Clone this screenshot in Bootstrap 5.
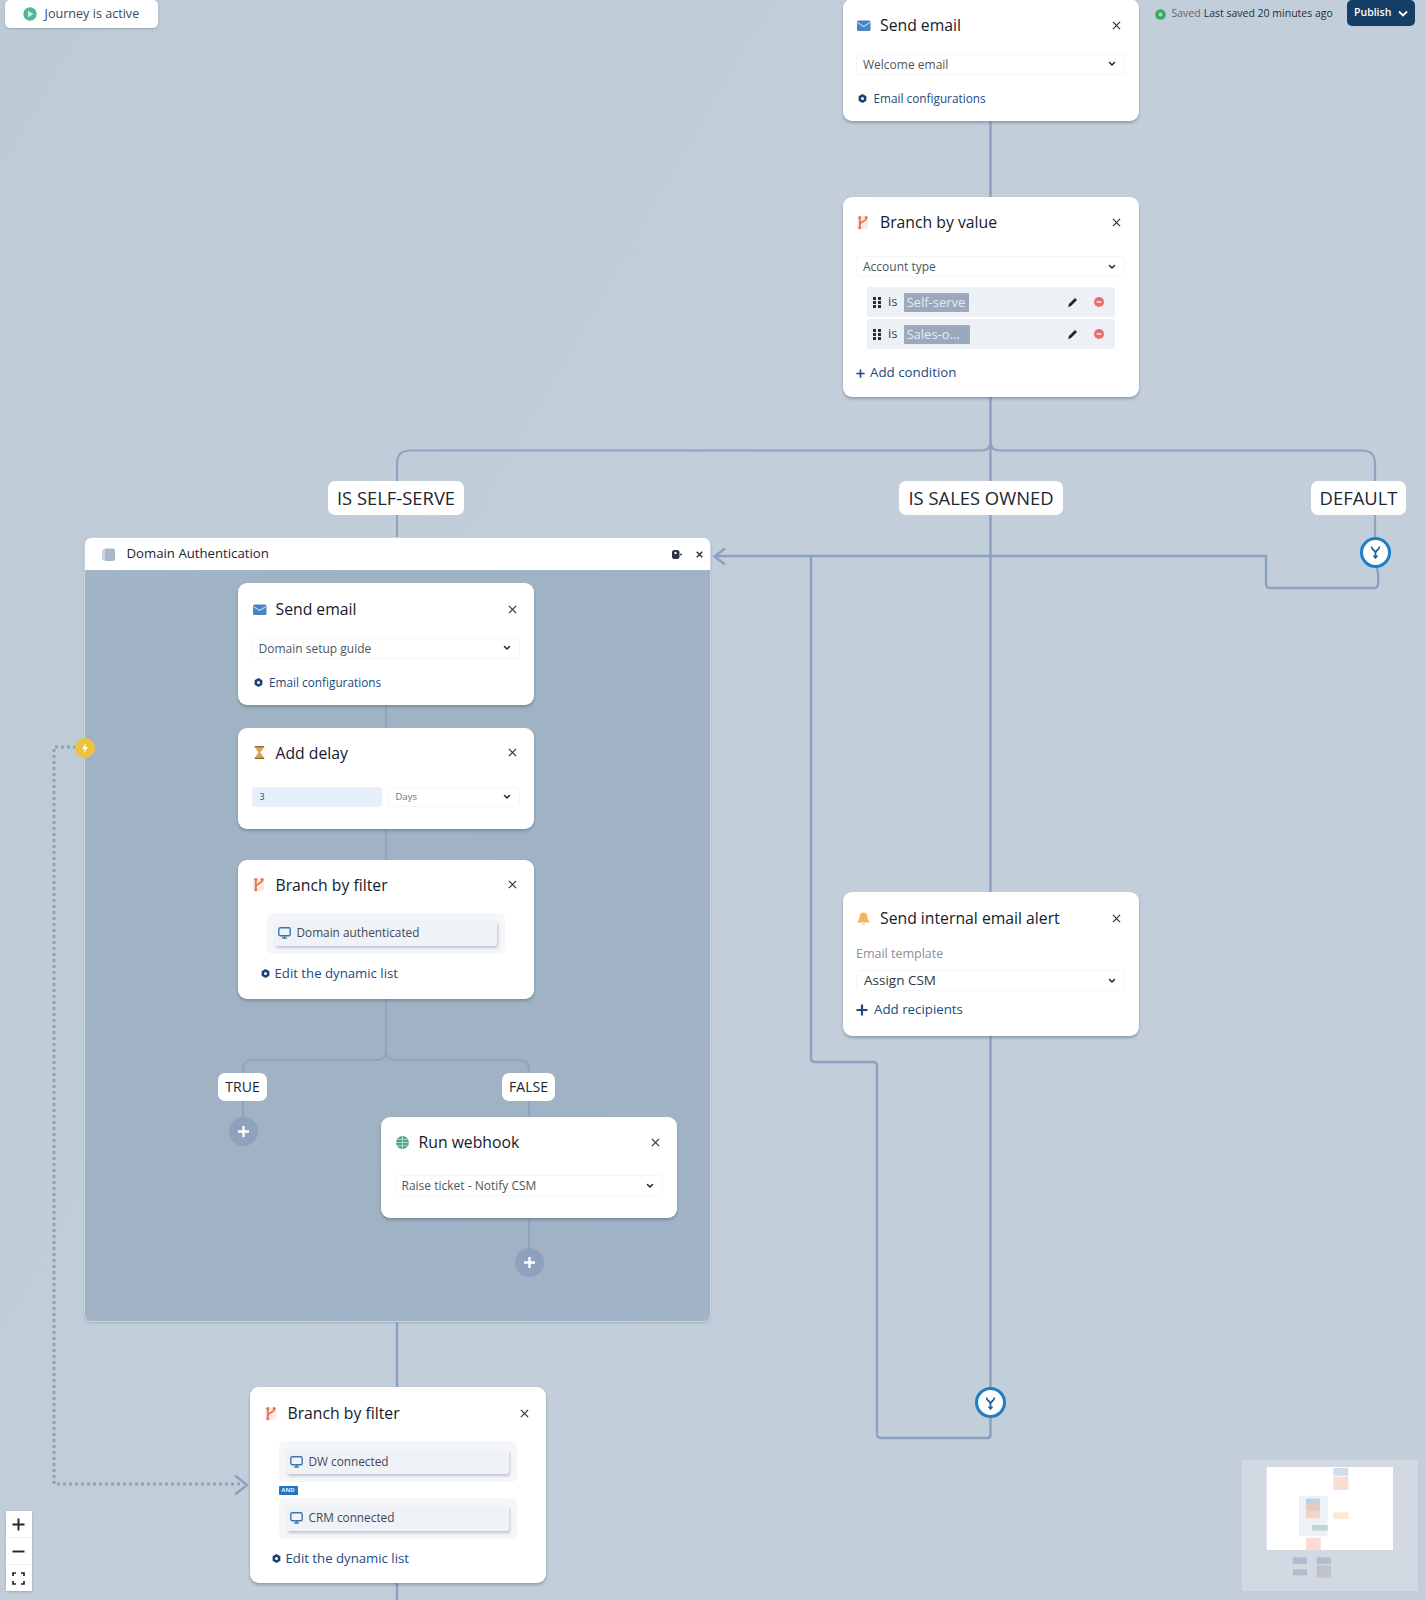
<!doctype html>
<html lang="en">
<head>
<meta charset="utf-8">
<title>Journey builder</title>
<link href="https://cdn.jsdelivr.net/npm/bootstrap@5.3.0/dist/css/bootstrap.min.css" rel="stylesheet">
<script src="https://cdn.jsdelivr.net/npm/bootstrap@5.3.0/dist/js/bootstrap.bundle.min.js"></script>
<style>
html,body{margin:0;background:#c1cdd9;}
body{font-family:"Open Sans","Liberation Sans",sans-serif;color:#1c2530;}
.flow-canvas{position:relative;width:1425px;height:1600px;overflow:hidden;background:linear-gradient(120deg,#bdcbd7 0%,#c2ced9 45%,#c3ced9 100%);}
.flow-lines{position:absolute;left:0;top:0;width:1425px;height:1600px;}
.flow-lines path{fill:none;stroke:#8aa2bf;stroke-width:2.4;}
.flow-lines path.dots{stroke:#8fa2b8;stroke-width:3;stroke-dasharray:3 3;}
.flow-lines path.thin{stroke:#8fa4bf;stroke-width:2.2;}
.node-card{position:absolute;width:296px;padding:13px 14px 0 13.5px;border:0;border-radius:9px;background:#fff;box-shadow:0 2px 3px rgba(64,84,108,.4);}
.node-head{height:24px;display:flex;align-items:center;}
.node-icon{width:15px;height:15px;flex:none;margin-right:9px;}
.node-title{font-size:15.75px;line-height:24px;color:#15202b;flex:1;white-space:nowrap;}
.x-btn{width:9px;height:9px;padding:0;border:0;display:flex;margin-right:3.5px;flex:none;}
.x-btn svg{width:9px;height:9px;display:block;}
.flow-select{--bs-form-select-bg-img:url("data:image/svg+xml,%3csvg xmlns='http://www.w3.org/2000/svg' viewBox='0 0 16 16'%3e%3cpath fill='none' stroke='%231c2530' stroke-width='3' stroke-linecap='round' stroke-linejoin='round' d='m3 5 5 5 5-5'/%3e%3c/svg%3e");display:block;height:21px;min-height:0;width:268.5px;padding:0 22px 0 6px;font-size:12px;line-height:19px;color:#4d5661;border:1px solid #f3f5f7;border-radius:4px;background-size:8px 8px;background-position:right 8px center;font-family:inherit;box-shadow:none;}
.flow-link{display:flex;align-items:center;height:18px;font-size:11.8px;font-weight:500;color:#1c4a80;text-decoration:none;white-space:nowrap;}
.gear{width:9px;height:9px;margin-left:2px;margin-right:6.5px;flex:none;}
.card-send-a{left:842.5px;top:-1px;height:121.6px;padding-top:14px;}
.card-value{left:842.5px;top:197px;height:200px;}
.card-alert{left:842.5px;top:892px;height:144px;padding-top:14px;}
.card-send-b{left:238px;top:583px;height:121.5px;padding-top:14px;}
.card-delay{left:238px;top:727.5px;height:101.5px;}
.card-filter-a{left:238px;top:859.5px;height:139px;}
.card-webhook{left:381px;top:1117px;height:101px;}
.card-filter-b{left:250px;top:1387px;height:196px;padding-top:14px;}
.sel-a{margin-top:16.5px;}
.sel-b{margin-top:22px;}
.sel-c{margin-top:21px;}
.link-a{margin-top:15px;}
.cond-row{display:flex;align-items:center;width:247.5px;height:30px;margin-left:11px;padding-left:6px;background:#edf1f6;border-radius:3px;font-size:13px;color:#39424d;}
.cond-first{margin-top:10px;}
.cond-next{margin-top:2px;}
.grip{width:8px;height:11px;margin-right:7px;}
.val-pill{display:block;width:65px;height:19px;margin-left:7px;padding-left:2px;line-height:19px;background:#9aa9bd;color:#e6ebf1;font-size:13px;border-radius:1px;white-space:nowrap;overflow:hidden;}
.val-wide{width:66px;}
.pen{width:11px;height:11px;margin-left:auto;}
.minus{width:10px;height:10px;margin-left:16px;margin-right:11px;}
.add-link{font-size:13.3px;font-weight:500;margin-top:15px;}
.plus-s{width:9px;height:9px;margin-left:-.5px;margin-right:5.5px;flex:none;}
.plus-m{width:12px;height:12px;margin-left:0;margin-right:6px;flex:none;}
.tmpl-label{margin-top:15px;font-size:12.5px;line-height:18px;color:#8a9098;}
.sel-t{margin-top:7px;font-size:13.5px;color:#2f3842;padding-left:7px;}
.link-t{margin-top:10px;height:18px;}
.delay-row{display:flex;gap:6.5px;margin-top:22px;}
.delay-num{width:131px;height:20.5px;min-height:0;padding:0 0 0 8px;font-size:9px;line-height:20px;border:0;border-radius:3px;background:#e6effb;color:#3e4854;}
.delay-sel{width:132px;height:20.5px;font-size:9.5px;line-height:18.5px;padding-left:6px;color:#6a727c;}
.filter-box{width:238.5px;padding:8.5px 8.5px 8px;margin-left:15px;background:#f4f6f9;border-radius:6px;}
.filter-first{margin-top:16px;}
.filter-item{display:flex;align-items:center;height:24.5px;padding-left:3px;font-size:11.8px;color:#3f4853;background:#eff2f6;box-shadow:1px 2px 3px rgba(90,105,125,.35);border-radius:2px;white-space:nowrap;}
.screen{width:13px;height:12px;margin-right:5.5px;flex:none;}
.link-f{font-size:13.2px;margin-top:11px;margin-left:7px;}
.link-f2{font-size:13.2px;margin-top:11px;margin-left:6px;}
.link-f .gear,.link-f2 .gear{margin-right:5px;}
.and-tag{display:block;width:19px;height:9px;margin:4px 0 2.5px 15px;background:#1f76c4;color:#dfeefa;font-size:6px;font-weight:700;line-height:9px;text-align:center;border-radius:1px;}
.group-frame{position:absolute;left:84px;top:537px;width:627px;height:785px;border:1px solid #c8d5df;border-radius:7px;background:linear-gradient(135deg,#a1b4c5,#a0b2c4 60%,#a2b3c7);box-shadow:0 1px 2px rgba(64,84,108,.25);overflow:hidden;}
.group-head{height:32px;padding-left:16px;padding-right:4px;background:#fff;display:flex;align-items:center;font-size:13.2px;font-weight:500;color:#1c2530;}
.group-doc{width:15px;height:15px;margin-right:10.5px;}
.group-exp{width:11px;height:11px;margin-left:auto;}
.group-x{width:7px;height:7px;margin-left:14px;margin-right:3px;}
.flow-tag{position:absolute;display:flex;align-items:center;justify-content:center;background:#fff;border-radius:7px;color:#1c2530;white-space:nowrap;}
.tag-big{top:481px;height:34px;font-size:18.4px;}
.tag-self{left:328px;width:136px;}
.tag-sales{left:899px;width:164px;}
.tag-default{left:1311px;width:95px;}
.tag-small{top:1072.500px;height:28px;font-size:14px;}
.tag-true{left:218px;width:49px;}
.tag-false{left:502px;width:53px;}
.add-dot{position:absolute;width:29px;height:29px;border-radius:50%;background:#8ea2be;display:flex;align-items:center;justify-content:center;}
.add-dot svg{width:13px;height:13px;}
.dot-a{left:228.5px;top:1116.5px;}
.dot-b{left:514.5px;top:1248px;}
.merge-dot{position:absolute;width:31px;height:31px;border-radius:50%;background:#fff;border:3px solid #1f7fc4;display:flex;align-items:center;justify-content:center;}
.merge-dot svg{width:13px;height:14px;}
.merge-a{left:1360px;top:536.5px;}
.merge-b{left:975px;top:1387px;}
.bolt-dot{position:absolute;left:75px;top:738px;width:20px;height:20px;border-radius:50%;background:#ecc23f;display:flex;align-items:center;justify-content:center;}
.bolt-dot svg{width:8px;height:10px;}
.journey-pill{position:absolute;left:4.5px;top:0;width:153.5px;height:28px;padding-left:18px;display:flex;align-items:center;background:#fff;border-radius:5px;box-shadow:0 1px 2px rgba(64,84,108,.3);font-size:12.6px;color:#414a54;}
.journey-pill svg{width:14px;height:14px;margin-right:8px;}
.save-state{position:absolute;left:1155px;top:5px;height:18px;display:flex;align-items:center;font-size:10.5px;color:#27303a;white-space:nowrap;}
.save-state svg{width:11px;height:11px;margin-right:5.5px;}
.save-word{color:#5f6974;margin-right:3px;}
.publish-btn{position:absolute;left:1347px;top:0;width:67.5px;height:26px;padding:0 0 0 7px;display:flex;align-items:center;background:#123f63;border:0;border-radius:5px;color:#fff;font-size:10.5px;font-weight:600;}
.publish-btn svg{width:10px;height:7px;margin-left:7px;}
.zoom-box{position:absolute;left:6px;top:1511px;width:26px;height:80px;background:#fff;display:flex;flex-direction:column;box-shadow:0 1px 2px rgba(64,84,108,.3);}
.zoom-btn{flex:1;padding:0 1px 0 0;border:0;border-radius:0;display:flex;align-items:center;justify-content:center;}
.zoom-btn + .zoom-btn{border-top:1px solid #eef1f4;}
.zoom-btn svg{width:13px;height:13px;}
.mini-map{position:absolute;left:1242px;top:1460px;width:176px;height:131px;background:#d2d9e3;}
.mini-map svg{display:block;width:176px;height:131px;filter:blur(.5px);}
</style>
</head>
<body>
<svg width="0" height="0" class="position-absolute">
  <defs>
    <symbol id="ic-mail" viewBox="0 0 15 15"><rect x="1" y="2.500" width="13.500" height="10.500" rx="1.500" fill="#4a84c4"/><path d="M1.500 4.500l6.200 4 6.300-4" fill="none" stroke="#b9d2ec" stroke-width="1.100"/></symbol>
    <symbol id="ic-branch" viewBox="0 0 15 15"><rect x="1" y="1" width="11" height="13" rx="3" fill="#fbe9e2"/><path d="M3.800 3v10M10.200 3c0 4-6.400 3-6.400 7" fill="none" stroke="#e8704a" stroke-width="1.700"/><circle cx="3.800" cy="2.600" r="1.500" fill="#e8704a"/><circle cx="10.200" cy="2.600" r="1.500" fill="#e8704a"/><circle cx="3.800" cy="12.800" r="1.500" fill="#e8704a"/></symbol>
    <symbol id="ic-glass" viewBox="0 0 15 15"><path d="M2.800 1h9.400v1.700H2.800zM2.800 12.300h9.400V14H2.800z" fill="#8a6a3c"/><path d="M4 2.700h7c0 3-2.400 3.600-2.400 4.800s2.400 1.800 2.400 4.800H4c0-3 2.400-3.600 2.400-4.800S4 5.700 4 2.700z" fill="#d9a653"/></symbol>
    <symbol id="ic-bell" viewBox="0 0 15 15"><path d="M7.500 1.500c-2.800 0-4 2-4 4.500 0 2.500-.8 3.500-2 4.700v.8h12v-.8c-1.200-1.200-2-2.200-2-4.700 0-2.500-1.200-4.500-4-4.500z" fill="#f4b560"/><path d="M6 12.600h3a1.500 1.500 0 0 1-3 0z" fill="#f7c98a"/></symbol>
    <symbol id="ic-globe" viewBox="0 0 15 15"><circle cx="7.500" cy="7.500" r="6.500" fill="#4fa488"/><path d="M1 7.500h13M7.500 1v13M2.200 4.300h10.600M2.200 10.700h10.600" stroke="#bfe0d5" stroke-width=".9" fill="none"/></symbol>
    <symbol id="ic-gear" viewBox="0 0 9 9"><path d="M4.500 0l3.900 2.250v4.500L4.500 9 .6 6.750v-4.500z" fill="#174472"/><circle cx="4.500" cy="4.500" r="1.500" fill="#fff"/></symbol>
    <symbol id="ic-screen" viewBox="0 0 13 12"><rect x=".8" y=".8" width="11.400" height="8" rx="1.500" fill="none" stroke="#3f74ad" stroke-width="1.400"/><path d="M4 11h5" stroke="#3f74ad" stroke-width="1.400"/><path d="M6.500 9v2" stroke="#3f74ad" stroke-width="1.200"/></symbol>
    <symbol id="ic-x" viewBox="0 0 10 10"><path d="M1 1l8 8M9 1l-8 8" stroke="#28323c" stroke-width="1.300" fill="none"/></symbol>
    <symbol id="ic-merge" viewBox="0 0 13 14"><path d="M2.500 1.500c0 3.500 4 3.500 4 6.500v4.500M10.500 1.500c0 3.500-4 3.500-4 6.500" fill="none" stroke="#2a5f95" stroke-width="1.700"/><path d="M4.500 10.500l2 2.500 2-2.500" fill="none" stroke="#2a5f95" stroke-width="1.500"/></symbol>
    <symbol id="ic-plus" viewBox="0 0 13 13"><path d="M6.500 1v11M1 6.500h11" stroke="#fff" stroke-width="2.300" fill="none"/></symbol>
    <symbol id="ic-plus-navy" viewBox="0 0 12 12"><path d="M6 .5v11M.5 6h11" stroke="#1c4a80" stroke-width="2.200" fill="none"/></symbol>
  </defs>
</svg>

<main class="flow-canvas">
  <section class="group-frame">
    <header class="group-head">
      <svg class="group-doc" viewBox="0 0 15 15"><rect x="3" y="1.500" width="11" height="12.500" rx="2" fill="#aab9c9"/><rect x="1" y="2.500" width="3" height="11" rx="1.500" fill="#c9d4df"/></svg>
      <span>Domain Authentication</span>
      <svg class="group-exp" viewBox="0 0 11 11"><rect x="1" y="1" width="7.500" height="9" rx="2.500" fill="#2b3440"/><circle cx="4.500" cy="4" r="1.200" fill="#fff"/><circle cx="10" cy="5.500" r="1" fill="#2b3440"/></svg>
      <svg class="group-x" viewBox="0 0 10 10"><path d="M1 1l8 8M9 1l-8 8" stroke="#2b3440" stroke-width="2" fill="none"/></svg>
    </header>
  </section>

  <svg class="flow-lines" viewBox="0 0 1425 1600">
    <path d="M990.500 120V197M990.500 397V892M990.500 1036V1403"/>
    <path class="thin" d="M990.500 442q0 8.500-10 8.500H410q-13 0-13 13V537"/>
    <path class="thin" d="M990.500 442q0 8.500 10 8.500H1362q13 0 13 13V537"/>
    <path d="M990.500 1418V1435q0 3-3 3H881q-4 0-4-4V1066q0-4-4-4H815q-4 0-4-4V556"/>
    <path d="M1376 566Q1379 572 1378 584q0 4-4 4H1270q-4 0-4-4V556H716"/>
    <path d="M725 548.500L714.500 556.500L725 564.500"/>
    <path class="thin" d="M386 704V728M386 829V860M386 998V1050q0 10-8 10H253q-10 0-10 10V1131M386 1050q0 10 8 10H519q10 0 10 10V1117M529 1218V1263"/>
    <path d="M397 1322V1600"/>
    <path class="dots" d="M76 747H54V1484H240"/>
    <path d="M235 1475.500L247 1485L235 1494.500" stroke="#93a5bb"/>
  </svg>

  <div class="journey-pill">
    <svg viewBox="0 0 14 14"><circle cx="7" cy="7" r="6.700" fill="#4fb893"/><path d="M5 3.800L10.500 7L5 10.200z" fill="#cdeee0"/></svg>
    <span>Journey is active</span>
  </div>

  <div class="save-state">
    <svg viewBox="0 0 11 11"><circle cx="5.500" cy="5.500" r="5.300" fill="#3aa866"/><circle cx="5.500" cy="5.500" r="2" fill="#a5dcbb"/></svg>
    <span class="save-word">Saved</span><span>Last saved 20 minutes ago</span>
  </div>
  <button class="btn publish-btn" type="button">Publish
    <svg viewBox="0 0 10 7"><path d="M1 1.500l4 4 4-4" fill="none" stroke="#fff" stroke-width="1.800"/></svg>
  </button>

  <article class="card node-card card-send-a">
    <div class="node-head"><svg class="node-icon"><use href="#ic-mail"/></svg><span class="node-title">Send email</span><button class="btn x-btn" type="button" aria-label="Remove"><svg><use href="#ic-x"/></svg></button></div>
    <select class="form-select flow-select sel-a"><option>Welcome email</option></select>
    <a class="flow-link link-a" href="#"><svg class="gear"><use href="#ic-gear"/></svg>Email configurations</a>
  </article>

  <article class="card node-card card-value">
    <div class="node-head"><svg class="node-icon"><use href="#ic-branch"/></svg><span class="node-title">Branch by value</span><button class="btn x-btn" type="button" aria-label="Remove"><svg><use href="#ic-x"/></svg></button></div>
    <select class="form-select flow-select sel-b"><option>Account type</option></select>
    <div class="cond-row cond-first">
      <svg class="grip" viewBox="0 0 8 11"><path d="M0 0h3v3H0zM5 0h3v3H5zM0 4h3v3H0zM5 4h3v3H5zM0 8h3v3H0zM5 8h3v3H5z" fill="#27303a"/></svg>
      <span>is</span><span class="val-pill">Self-serve</span>
      <svg class="pen" viewBox="0 0 11 11"><path d="M8 1l2 2-6 6-3 1 1-3z" fill="#1c2530"/></svg>
      <svg class="minus" viewBox="0 0 10 10"><circle cx="5" cy="5" r="5" fill="#ec6b6f"/><path d="M2.500 5h5" stroke="#fbe3e4" stroke-width="1.600"/></svg>
    </div>
    <div class="cond-row cond-next">
      <svg class="grip" viewBox="0 0 8 11"><path d="M0 0h3v3H0zM5 0h3v3H5zM0 4h3v3H0zM5 4h3v3H5zM0 8h3v3H0zM5 8h3v3H5z" fill="#27303a"/></svg>
      <span>is</span><span class="val-pill val-wide">Sales-o...</span>
      <svg class="pen" viewBox="0 0 11 11"><path d="M8 1l2 2-6 6-3 1 1-3z" fill="#1c2530"/></svg>
      <svg class="minus" viewBox="0 0 10 10"><circle cx="5" cy="5" r="5" fill="#ec6b6f"/><path d="M2.500 5h5" stroke="#fbe3e4" stroke-width="1.600"/></svg>
    </div>
    <a class="flow-link add-link" href="#"><svg class="plus-s" viewBox="0 0 12 12"><use href="#ic-plus-navy"/></svg>Add condition</a>
  </article>

  <article class="card node-card card-alert">
    <div class="node-head"><svg class="node-icon"><use href="#ic-bell"/></svg><span class="node-title">Send internal email alert</span><button class="btn x-btn" type="button" aria-label="Remove"><svg><use href="#ic-x"/></svg></button></div>
    <div class="tmpl-label">Email template</div>
    <select class="form-select flow-select sel-t"><option>Assign CSM</option></select>
    <a class="flow-link add-link link-t" href="#"><svg class="plus-m"><use href="#ic-plus-navy"/></svg>Add recipients</a>
  </article>

  <article class="card node-card card-send-b">
    <div class="node-head"><svg class="node-icon"><use href="#ic-mail"/></svg><span class="node-title">Send email</span><button class="btn x-btn" type="button" aria-label="Remove"><svg><use href="#ic-x"/></svg></button></div>
    <select class="form-select flow-select sel-a"><option>Domain setup guide</option></select>
    <a class="flow-link link-a" href="#"><svg class="gear"><use href="#ic-gear"/></svg>Email configurations</a>
  </article>

  <article class="card node-card card-delay">
    <div class="node-head"><svg class="node-icon"><use href="#ic-glass"/></svg><span class="node-title">Add delay</span><button class="btn x-btn" type="button" aria-label="Remove"><svg><use href="#ic-x"/></svg></button></div>
    <div class="delay-row">
      <input class="form-control delay-num" type="text" value="3" aria-label="Delay">
      <select class="form-select flow-select delay-sel"><option>Days</option></select>
    </div>
  </article>

  <article class="card node-card card-filter-a">
    <div class="node-head"><svg class="node-icon"><use href="#ic-branch"/></svg><span class="node-title">Branch by filter</span><button class="btn x-btn" type="button" aria-label="Remove"><svg><use href="#ic-x"/></svg></button></div>
    <div class="filter-box filter-first"><div class="filter-item"><svg class="screen"><use href="#ic-screen"/></svg>Domain authenticated</div></div>
    <a class="flow-link link-f" href="#"><svg class="gear"><use href="#ic-gear"/></svg>Edit the dynamic list</a>
  </article>

  <article class="card node-card card-webhook">
    <div class="node-head"><svg class="node-icon"><use href="#ic-globe"/></svg><span class="node-title">Run webhook</span><button class="btn x-btn" type="button" aria-label="Remove"><svg><use href="#ic-x"/></svg></button></div>
    <select class="form-select flow-select sel-c"><option>Raise ticket - Notify CSM</option></select>
  </article>

  <article class="card node-card card-filter-b">
    <div class="node-head"><svg class="node-icon"><use href="#ic-branch"/></svg><span class="node-title">Branch by filter</span><button class="btn x-btn" type="button" aria-label="Remove"><svg><use href="#ic-x"/></svg></button></div>
    <div class="filter-box filter-first"><div class="filter-item"><svg class="screen"><use href="#ic-screen"/></svg>DW connected</div></div>
    <span class="and-tag">AND</span>
    <div class="filter-box"><div class="filter-item"><svg class="screen"><use href="#ic-screen"/></svg>CRM connected</div></div>
    <a class="flow-link link-f2" href="#"><svg class="gear"><use href="#ic-gear"/></svg>Edit the dynamic list</a>
  </article>

  <span class="flow-tag tag-big tag-self">IS SELF-SERVE</span>
  <span class="flow-tag tag-big tag-sales">IS SALES OWNED</span>
  <span class="flow-tag tag-big tag-default">DEFAULT</span>
  <span class="flow-tag tag-small tag-true">TRUE</span>
  <span class="flow-tag tag-small tag-false">FALSE</span>

  <span class="add-dot dot-a"><svg><use href="#ic-plus"/></svg></span>
  <span class="add-dot dot-b"><svg><use href="#ic-plus"/></svg></span>
  <span class="merge-dot merge-a"><svg><use href="#ic-merge"/></svg></span>
  <span class="merge-dot merge-b"><svg><use href="#ic-merge"/></svg></span>
  <span class="bolt-dot"><svg viewBox="0 0 8 10"><path d="M5 0L1 6h2.500L3 10l4-6H4.500z" fill="#fff"/></svg></span>

  <div class="zoom-box">
    <button class="btn zoom-btn" type="button" aria-label="Zoom in"><svg viewBox="0 0 13 13"><path d="M6.500 .5v12M.5 6.500h12" stroke="#1c2530" stroke-width="1.900"/></svg></button>
    <button class="btn zoom-btn" type="button" aria-label="Zoom out"><svg viewBox="0 0 13 13"><path d="M.5 6.500h12" stroke="#1c2530" stroke-width="1.900"/></svg></button>
    <button class="btn zoom-btn" type="button" aria-label="Fit"><svg viewBox="0 0 13 13"><path d="M1 4V1h3M9 1h3v3M12 9v3H9M4 12H1V9" fill="none" stroke="#1c2530" stroke-width="1.700"/></svg></button>
  </div>

  <div class="mini-map">
    <svg viewBox="0 0 176 131">
      <rect x="24.700" y="7" width="126.300" height="83" fill="#fff"/>
      <rect x="91.300" y="8" width="15" height="7.700" fill="#cfdcec"/>
      <rect x="91.300" y="16.700" width="15" height="13.300" fill="#fbdcd3"/>
      <rect x="57" y="36" width="28.700" height="40" fill="#eef2f4"/>
      <rect x="64" y="38.500" width="14" height="5.500" fill="#c0d1e0"/>
      <rect x="64" y="44" width="14" height="6.800" fill="#e1cdc2"/>
      <rect x="64" y="50.800" width="14" height="7.500" fill="#f7d3c7"/>
      <rect x="70.300" y="65" width="15.400" height="5.700" fill="#bfd7cf"/>
      <rect x="91.300" y="52.300" width="15" height="6.700" fill="#fce9d6"/>
      <rect x="64" y="77.700" width="14.700" height="12.300" fill="#fbdcd3"/>
      <rect x="50.700" y="97.300" width="14.300" height="6.700" fill="#aebed0"/>
      <rect x="51" y="109.300" width="14" height="6" fill="#b3bccb"/>
      <rect x="74.700" y="97.300" width="14.300" height="6.700" fill="#b6bcca"/>
      <rect x="74.700" y="105.300" width="14.300" height="12.300" fill="#bfc3ce"/>
    </svg>
  </div>
</main>
</body>
</html>
